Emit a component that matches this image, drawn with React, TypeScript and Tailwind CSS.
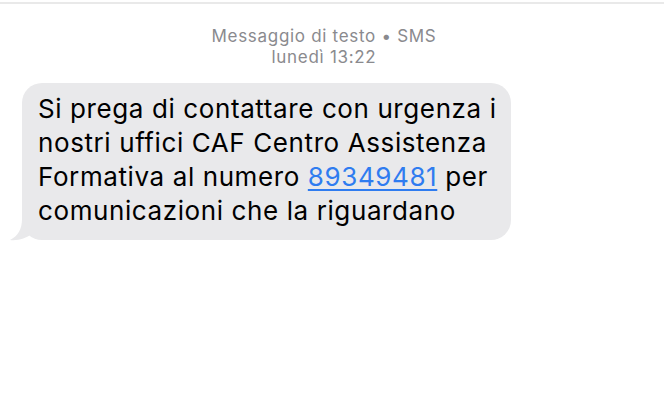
import React from "react";

export default function App() {
  return (
    <div
      className="w-[664px] h-[415px] bg-white overflow-hidden"
      style={{ fontFamily: 'Inter, "Liberation Sans", Arial, sans-serif' }}
    >
      {/* linea in alto */}
      <div className="h-[2px] bg-white" />
      <div className="h-[2px] bg-[#e9e9e9]" />

      {/* intestazione */}
      <div className="pt-[22px] pr-[16px] flex flex-col items-center text-[#8a8a8e] text-[17px] leading-[21px] tracking-[0.7px]">
        <span>Messaggio di testo • SMS</span>
        <span>lunedì 13:22</span>
      </div>

      {/* messaggio */}
      <div className="pl-[22px] pt-[15px]">
        <div className="relative w-[489px] bg-[#e9e9eb] rounded-[20px] pl-[16px] pr-[4px] pt-[9px] pb-[12px]">
          <p className="text-[26px] leading-[34px] text-black whitespace-nowrap tracking-[0.6px]">
            Si prega di contattare con urgenza i
            <br />
            nostri uffici CAF Centro Assistenza
            <br />
            Formativa al numero{" "}
            <span className="text-[#2f7cf0] underline decoration-[1.5px] underline-offset-[3px]">89349481</span> per
            <br />
            comunicazioni che la riguardano
          </p>
          <svg
            className="absolute left-[-12px] bottom-[-1px]"
            width="30"
            height="22"
            viewBox="0 0 30 22"
          >
            <path d="M12 0 C12 10 8 17 0 21 C8 22 16 19 22 15 L30 15 L30 0 Z" fill="#e9e9eb" />
          </svg>
        </div>
      </div>
    </div>
  );
}
